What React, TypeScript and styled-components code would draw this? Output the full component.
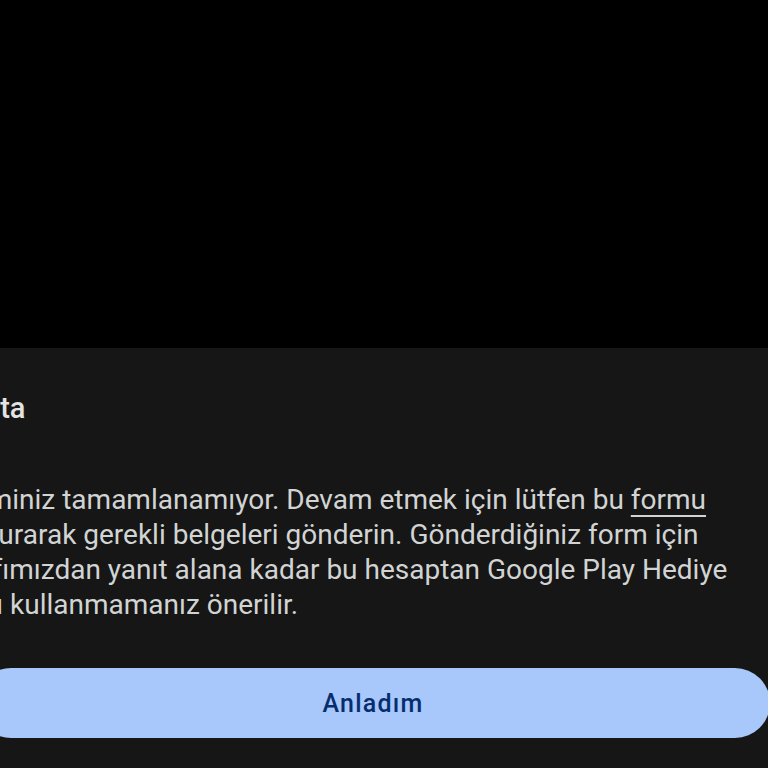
import React from "react";
import styled, { createGlobalStyle } from "styled-components";

const Global = createGlobalStyle`
  html, body {
    margin: 0;
    padding: 0;
    background: #000;
  }
  * {
    box-sizing: border-box;
  }
`;

const Screen = styled.div`
  display: flex;
  flex-direction: column;
  width: 768px;
  height: 768px;
  overflow: hidden;
  background: #000;
`;

const Backdrop = styled.div`
  flex: 0 0 348px;
  background: #000;
`;

const Sheet = styled.div`
  flex: 1;
  background: #161616;
  overflow: hidden;
`;

// the dialog is wider than the screen; it is cut on the left
const Dialog = styled.div`
  display: flex;
  flex-direction: column;
  width: 830px;
  margin-left: -56px;
  padding-top: 42px;
  font-family: Roboto, "Noto Sans", sans-serif;
`;

const Title = styled.h2`
  margin: 0;
  padding-left: 20px;
  font-size: 29px;
  font-weight: 500;
  line-height: 36px;
  color: #e3e3e3;
`;

const Body = styled.p`
  margin: 56px 0 0 0;
  font-size: 28px;
  line-height: 35px;
  color: #d2d4d3;
  white-space: nowrap;
`;

const Link = styled.span`
  text-decoration: underline;
  text-underline-offset: 6px;
  text-decoration-thickness: 2px;
`;

const Actions = styled.div`
  display: flex;
  margin-top: 46px;
  padding-left: 32px;
`;

const Button = styled.button`
  flex: 0 0 794px;
  height: 70px;
  border: none;
  border-radius: 35px;
  background: #a8c7fa;
  color: #062e6f;
  font-family: Roboto, "Noto Sans", sans-serif;
  font-size: 25px;
  font-weight: 500;
  letter-spacing: 1.2px;
`;

export default function App() {
  return (
    <Screen>
      <Global />
      <Backdrop />
      <Sheet>
        <Dialog>
          <Title>Hata</Title>
          <Body>
            İşleminiz tamamlanamıyor. Devam etmek için lütfen bu <Link>formu</Link>
            <br />
            doldurarak gerekli belgeleri gönderin. Gönderdiğiniz form için
            <br />
            tarafımızdan yanıt alana kadar bu hesaptan Google Play Hediye
            <br />
            Kartı kullanmamanız önerilir.
          </Body>
          <Actions>
            <Button>Anladım</Button>
          </Actions>
        </Dialog>
      </Sheet>
    </Screen>
  );
}
